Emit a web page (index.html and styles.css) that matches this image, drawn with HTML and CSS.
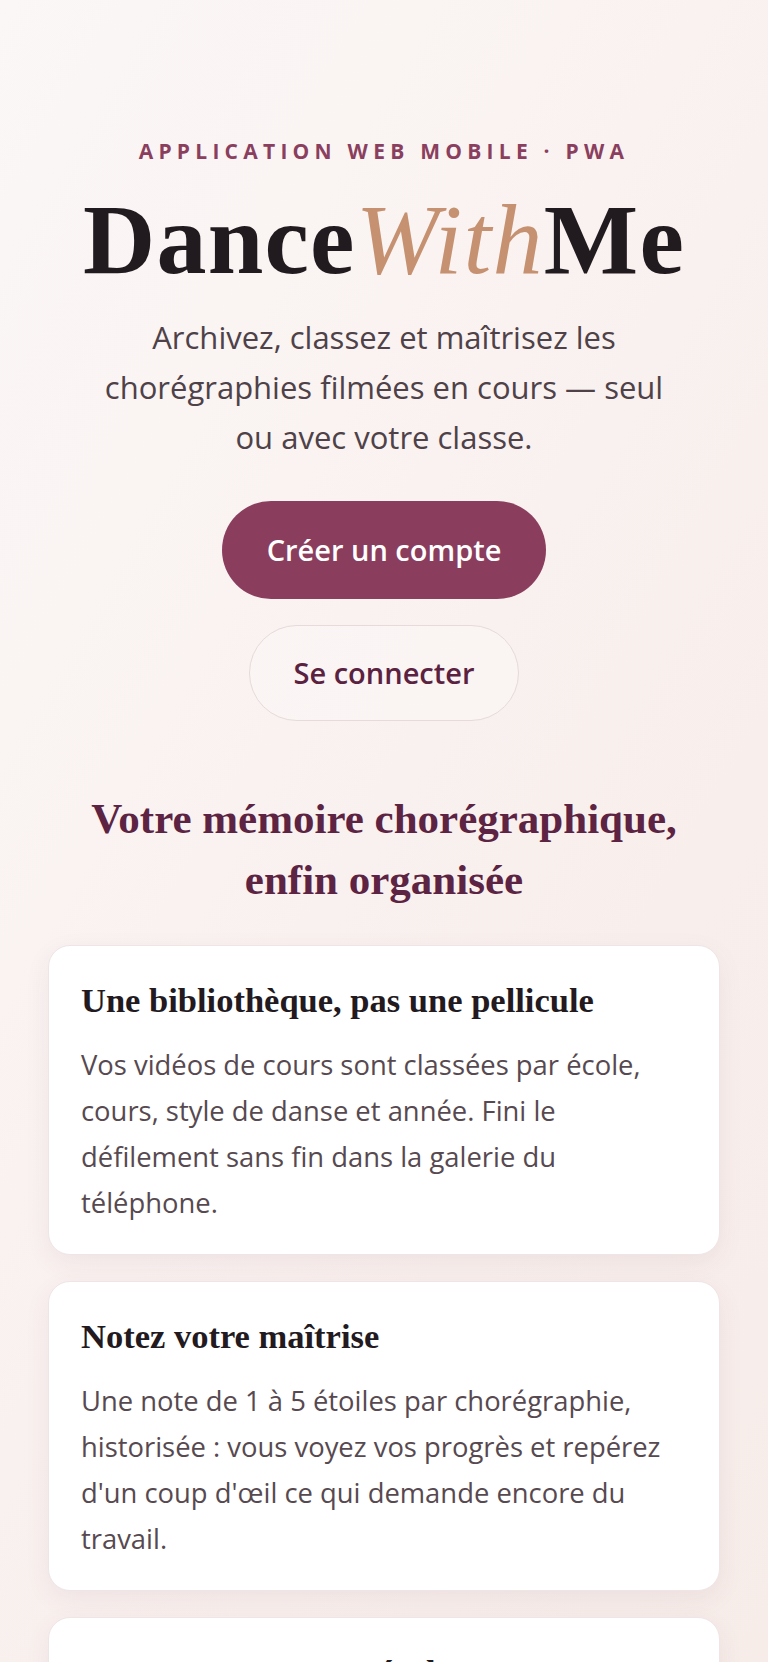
FILE: index.html
```html
<!DOCTYPE html>
<html lang="fr">
<head>
<meta charset="utf-8">
<meta name="viewport" content="width=device-width, initial-scale=1">
<title>DanceWithMe</title>
<link rel="stylesheet" href="styles.css">
</head>
<body>
<main class="page">
  <section class="hero">
    <p class="eyebrow">Application web mobile · PWA</p>
    <h1 class="brand">Dance<em class="brand-accent">With</em>Me</h1>
    <p class="lead">Archivez, classez et maîtrisez les chorégraphies filmées en cours — seul ou avec votre classe.</p>
    <div class="actions">
      <a class="btn btn-primary" href="#">Créer un compte</a>
      <a class="btn btn-ghost" href="#">Se connecter</a>
    </div>
  </section>
  <section class="features">
    <h2 class="features-title">Votre mémoire chorégraphique, enfin organisée</h2>
    <div class="cards">
      <article class="card">
        <h3 class="card-title">Une bibliothèque, pas une pellicule</h3>
        <p class="card-text">Vos vidéos de cours sont classées par école, cours, style de danse et année. Fini le défilement sans fin dans la galerie du téléphone.</p>
      </article>
      <article class="card">
        <h3 class="card-title">Notez votre maîtrise</h3>
        <p class="card-text">Une note de 1 à 5 étoiles par chorégraphie, historisée : vous voyez vos progrès et repérez d'un coup d'œil ce qui demande encore du travail.</p>
      </article>
      <article class="card">
        <h3 class="card-title">Partagez avec votre école</h3>
        <p class="card-text">Invitez les élèves de votre cours à retrouver les mêmes vidéos, au même endroit, classées de la même façon.</p>
      </article>
    </div>
  </section>
</main>
</body>
</html>
```
FILE: styles.css
```css
* { box-sizing: border-box; }
html, body { margin: 0; padding: 0; }
body {
  font-family: "Open Sans", "Noto Sans", sans-serif;
  color: #4f4249;
  background: linear-gradient(120deg, #fbf7f7 0%, #f9f1ef 45%, #f6ebe7 100%);
  min-height: 100vh;
}
.page {
  padding: 138px 48px 60px;
}
.hero {
  display: flex;
  flex-direction: column;
  align-items: center;
  text-align: center;
}
.eyebrow {
  margin: 0;
  font-size: 21px;
  line-height: 27px;
  font-weight: 700;
  letter-spacing: 0.25em;
  text-transform: uppercase;
  color: #8a3f5e;
}
.brand {
  margin: 21px 0 0;
  font-family: "Liberation Serif", "DejaVu Serif", serif;
  font-size: 100px;
  line-height: 108px;
  font-weight: 700;
  color: #211a1e;
  letter-spacing: 0.012em;
}
.brand-accent {
  font-style: italic;
  font-weight: 400;
  color: #c69170;
}
.lead {
  margin: 18px 0 0;
  max-width: 580px;
  font-size: 31px;
  line-height: 50px;
  color: #4e4148;
}
.actions {
  margin-top: 39px;
  display: flex;
  flex-direction: column;
  align-items: center;
  gap: 26px;
}
.btn {
  display: inline-block;
  font-size: 29px;
  line-height: 32px;
  font-weight: 600;
  text-decoration: none;
  border-radius: 999px;
}
.btn-primary {
  padding: 33px 45px;
  background: #8a3d5c;
  color: #ffffff;
}
.btn-ghost {
  padding: 31px 44px;
  border: 1px solid #e6dada;
  background: rgba(255, 255, 255, 0.25);
  color: #5a2240;
}
.features {
  margin-top: 67px;
}
.features-title {
  margin: 0 auto;
  max-width: 640px;
  text-align: center;
  font-family: "Liberation Serif", "DejaVu Serif", serif;
  font-size: 43px;
  line-height: 61px;
  font-weight: 700;
  color: #5c2442;
}
.cards {
  margin-top: 35px;
  display: flex;
  flex-direction: column;
  gap: 26px;
}
.card {
  background: #ffffff;
  border: 1px solid #efe5e7;
  border-radius: 22px;
  padding: 35px 32px 28px;
  box-shadow: 0 8px 26px rgba(120, 60, 80, 0.07);
}
.card-title {
  margin: 0;
  font-family: "Liberation Serif", "DejaVu Serif", serif;
  font-size: 34.5px;
  line-height: 39px;
  font-weight: 700;
  color: #221a1f;
}
.card-text {
  margin: 22px 0 0;
  font-size: 27.4px;
  line-height: 46px;
  color: #574950;
}
```
